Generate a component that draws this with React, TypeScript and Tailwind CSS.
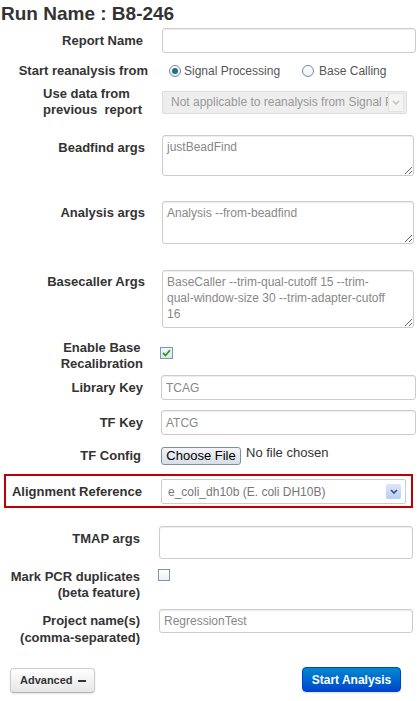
import React from "react";

const inputCls =
  "border border-[#cccccc] rounded-[3px] bg-white shadow-[inset_0_1px_1px_rgba(0,0,0,0.075)] px-[4px] text-[12px] text-[#888888] outline-none font-['Liberation_Sans',Arial,sans-serif]";
const taCls =
  "border border-[#cccccc] rounded-[3px] bg-white shadow-[inset_0_1px_1px_rgba(0,0,0,0.075)] pl-[4px] pt-[3px] text-[12px] leading-[16px] text-[#888888] outline-none block font-['Liberation_Sans',Arial,sans-serif]";
const labelCls = "shrink-0 text-right text-[13px] font-bold leading-[16px] text-[#333333]";

function Chevron({ color }: { color: string }) {
  return (
    <svg width="8" height="5" viewBox="0 0 8 5">
      <path d="M1 1 L4 4 L7 1" fill="none" stroke={color} strokeWidth="1.6" />
    </svg>
  );
}

export default function App() {
  return (
    <div className="w-[420px] h-[701px] bg-white overflow-hidden font-['Liberation_Sans',Arial,sans-serif] text-[#333333]">
      <h1 className="mt-[2px] ml-[1px] text-[19px] leading-[24px] font-bold text-[#333333]">
        Run Name : B8-246
      </h1>

      {/* Report Name */}
      <div className="mt-[2px] flex items-center">
        <div className={`${labelCls} w-[143px]`}>Report Name</div>
        <input className={`${inputCls} ml-[19px] w-[254px] h-[25px]`} defaultValue="" />
      </div>

      {/* Start reanalysis */}
      <div className="mt-[8px] h-[20px] flex items-center">
        <div className={`${labelCls} w-[148px] whitespace-nowrap`}>Start reanalysis from</div>
        <div className="ml-[21px] flex items-center">
          <span className="w-[12px] h-[12px] rounded-full border border-[#6f8aa6] bg-gradient-to-b from-[#ffffff] to-[#e4e8ee] flex items-center justify-center">
            <span className="w-[6px] h-[6px] rounded-full bg-[#2a6a84]" />
          </span>
          <span className="ml-[3px] text-[12px] text-[#555555]">Signal Processing</span>
          <span className="ml-[22px] w-[12px] h-[12px] rounded-full border border-[#6f8aa6] bg-gradient-to-b from-[#ffffff] to-[#eef0f4]" />
          <span className="ml-[5px] text-[12px] text-[#555555]">Base Calling</span>
        </div>
      </div>

      {/* Use data from previous report */}
      <div className="mt-[5px] flex items-center">
        <div className={`${labelCls} w-[142px]`}>
          <span className="inline-block text-left">
            Use data from
            <br />
            previous&nbsp; report
          </span>
        </div>
        <div className="ml-[20px] w-[245px] h-[23px] border border-[#dddddd] rounded-[2px] bg-[#eeeeee] flex items-center overflow-hidden">
          <span className="ml-[8px] flex-1 whitespace-nowrap overflow-hidden text-[12px] text-[#999999]">
            Not applicable to reanalysis from Signal Processing
          </span>
          <span className="w-[16px] h-[19px] mr-[2px] bg-[#f4f4f2] border border-[#e2e2e0] flex items-center justify-center">
            <Chevron color="#c4c4c4" />
          </span>
        </div>
      </div>

      {/* Beadfind args */}
      <div className="mt-[17px] flex items-start">
        <div className={`${labelCls} w-[145px] pt-[5px]`}>Beadfind args</div>
        <textarea className={`${taCls} ml-[17px] w-[252px] h-[41px] pr-[4px]`} defaultValue="justBeadFind" />
      </div>

      {/* Analysis args */}
      <div className="mt-[25px] flex items-start">
        <div className={`${labelCls} w-[145px] pt-[4px]`}>Analysis args</div>
        <textarea
          className={`${taCls} ml-[17px] w-[252px] h-[43px] pr-[4px]`}
          defaultValue="Analysis --from-beadfind"
        />
      </div>

      {/* Basecaller Args */}
      <div className="mt-[26px] flex items-start">
        <div className={`${labelCls} w-[145px] pt-[4px]`}>Basecaller Args</div>
        <textarea
          className={`${taCls} ml-[17px] w-[252px] h-[58px] pr-[4px]`}
          defaultValue={"BaseCaller --trim-qual-cutoff 15 --trim-\nqual-window-size 30 --trim-adapter-cutoff\n16"}
        />
      </div>

      {/* Enable Base Recalibration */}
      <div className="mt-[12px] flex items-start">
        <div className={`${labelCls} w-[143px] leading-[15px]`}>
          <span className="inline-block text-center">
            Enable Base
            <br />
            Recalibration
          </span>
        </div>
        <span className="ml-[17px] mt-[7px] w-[13px] h-[12px] border border-[#7f96b2] bg-gradient-to-b from-[#f4f6f9] to-[#dfe5ec] flex items-center justify-center">
          <svg width="9" height="8" viewBox="0 0 9 8">
            <path d="M1 4 L3.5 6.5 L8 1.2" fill="none" stroke="#21a321" strokeWidth="1.8" />
          </svg>
        </span>
      </div>

      {/* Library Key */}
      <div className="mt-[3px] flex items-center">
        <div className={`${labelCls} w-[143px]`}>Library Key</div>
        <input className={`${inputCls} ml-[18px] w-[255px] h-[25px]`} defaultValue="TCAG" />
      </div>

      {/* TF Key */}
      <div className="mt-[10px] flex items-center">
        <div className={`${labelCls} w-[143px]`}>TF Key</div>
        <input className={`${inputCls} ml-[18px] w-[255px] h-[25px]`} defaultValue="ATCG" />
      </div>

      {/* TF Config */}
      <div className="mt-[12px] h-[18px] flex items-center">
        <div className={`${labelCls} w-[141px]`}>TF Config</div>
        <button className="ml-[20px] w-[80px] h-[18px] border border-[#7f8da3] rounded-[3px] bg-gradient-to-b from-[#f2f4f7] to-[#d9dee6] text-[13px] leading-[14px] text-black">
          Choose File
        </button>
        <span className="ml-[5px] -mt-[6px] text-[13px] text-[#333333]">No file chosen</span>
      </div>

      {/* Alignment Reference */}
      <div className="mt-[9px] ml-[4px] w-[409px] border-2 border-[#c00000] flex items-center pt-[3px] pb-[2px]">
        <div className={`${labelCls} w-[136px] whitespace-nowrap`}>Alignment Reference</div>
        <div className="ml-[19px] w-[245px] h-[25px] border border-[#cccccc] rounded-[2px] bg-white flex items-center">
          <span className="ml-[6px] flex-1 whitespace-nowrap text-[12px] text-[#777777]">
            e_coli_dh10b (E. coli DH10B)
          </span>
          <span className="mr-[4px] w-[15px] h-[15px] rounded-[2px] bg-gradient-to-b from-[#dbe6fb] to-[#b9cdf3] flex items-center justify-center">
            <Chevron color="#3c4f7a" />
          </span>
        </div>
      </div>

      {/* TMAP args */}
      <div className="mt-[18px] flex items-start">
        <div className={`${labelCls} w-[140px] pt-[5px]`}>TMAP args</div>
        <input className={`${inputCls} ml-[19px] w-[254px] h-[33px]`} defaultValue="" />
      </div>

      {/* Mark PCR duplicates */}
      <div className="mt-[10px] flex items-start">
        <div className={`${labelCls} w-[140px]`}>
          Mark PCR duplicates
          <br />
          (beta feature)
        </div>
        <span className="ml-[18px] w-[12px] h-[12px] border border-[#7f96b2] bg-gradient-to-b from-[#ffffff] to-[#eef1f5]" />
      </div>

      {/* Project name(s) */}
      <div className="mt-[8px] flex items-start">
        <div className={`${labelCls} w-[140px] pt-[3px] leading-[17px]`}>
          Project name(s)
          <br />
          (comma-separated)
        </div>
        <input className={`${inputCls} ml-[19px] w-[254px] h-[24px]`} defaultValue="RegressionTest" />
      </div>

      {/* Buttons */}
      <div className="mt-[21px] pl-[10px] pr-[19px] flex items-start justify-between">
        <button className="mt-[1px] w-[85px] h-[25px] border border-[#cccccc] border-b-[#b3b3b3] rounded-[4px] bg-gradient-to-b from-[#ffffff] to-[#e6e6e6] shadow-[0_1px_2px_rgba(0,0,0,0.12)] flex items-center pl-[9px]">
          <span className="text-[11px] font-bold text-[#333333]">Advanced</span>
          <span className="ml-[5px] w-[8px] h-[2px] bg-[#333333]" />
        </button>
        <button className="w-[99px] h-[25px] border border-[#0044cc] rounded-[4px] bg-gradient-to-b from-[#0088cc] to-[#0044cc] shadow-[0_1px_2px_rgba(0,0,0,0.15)] text-[12px] font-bold text-white">
          Start Analysis
        </button>
      </div>
    </div>
  );
}
